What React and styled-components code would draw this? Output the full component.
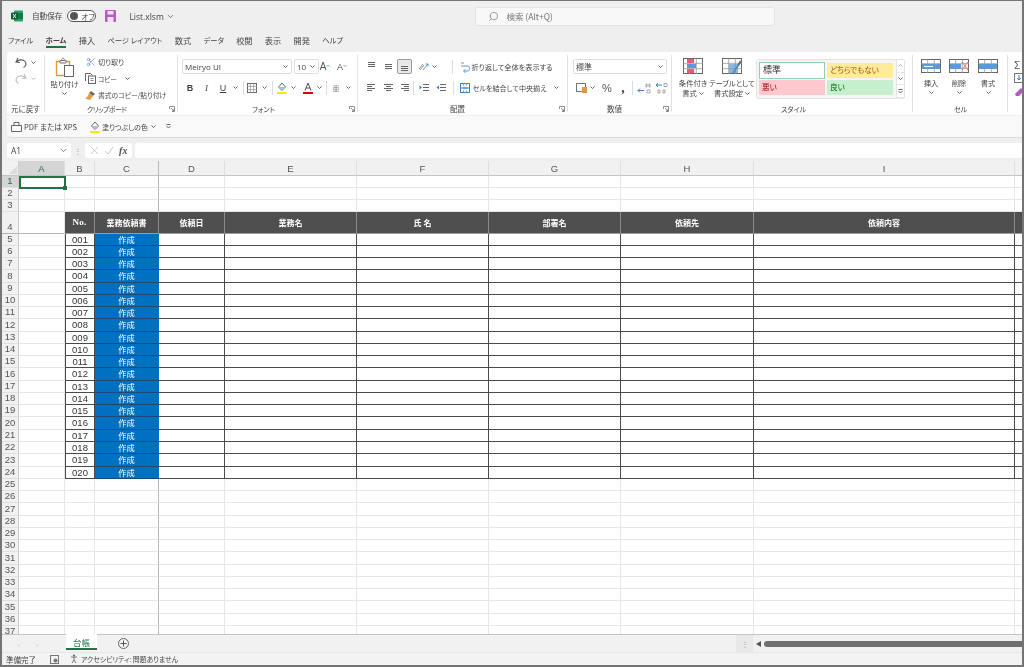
import React from "react";
import styled, { createGlobalStyle } from "styled-components";
import { Search, Scissors, ChevronDown } from "lucide-react";

const Global = createGlobalStyle`
  html, body { margin: 0; padding: 0; background: #efefef; }
  * { box-sizing: border-box; }
  body {
    font-family: "Noto Sans CJK JP", "Noto Sans", sans-serif;
    font-feature-settings: "palt";
    color: #444;
    overflow: hidden;
  }
`;

const Window = styled.div`
  width: 1024px;
  height: 667px;
  display: flex;
  flex-direction: column;
  border: 2px solid #757575;
  border-width: 1.5px 2px 2px 2px;
  background: #efefef;
  overflow: hidden;
  filter: blur(0.35px);
`;

/* title bar */
const TitleBar = styled.div`
  height: 30px;
  flex: none;
  display: flex;
  align-items: center;
  padding-left: 9px;
  font-size: 8.5px;
`;
const Toggle = styled.div`
  width: 29px;
  height: 12px;
  margin-left: 5px;
  border: 1px solid #555;
  border-radius: 7px;
  background: #fff;
  display: flex;
  align-items: center;
  padding-left: 2px;
  gap: 3px;
  font-size: 7.5px;
  &::before {
    content: "";
    width: 8px;
    height: 8px;
    border-radius: 50%;
    background: #555;
  }
`;
const FileName = styled.span`
  margin-left: 13px;
  font-family: "Open Sans", sans-serif;
  font-size: 8.5px;
  width: 37px;
`;
const SearchBox = styled.div`
  margin-left: 300px;
  width: 300px;
  height: 19px;
  background: #f8f8f8;
  border: 1px solid #e4e4e4;
  border-radius: 3px;
  display: flex;
  align-items: center;
  gap: 7px;
  padding-left: 12px;
  font-size: 8.5px;
  color: #777;
`;

/* tabs */
const TabRow = styled.div`
  height: 21px;
  flex: none;
  display: flex;
  align-items: center;
  padding: 0 0 4px 6px;
  gap: 12.3px;
`;
const Tab = styled.div`
  position: relative;
  font-size: ${(p) => (p.$kana ? 7.3 : 8.2)}px;
  line-height: 12px;
  white-space: nowrap;
  font-weight: ${(p) => (p.$on ? 700 : 400)};
  ${(p) =>
    p.$on &&
    `&::after { content: ""; position: absolute; left: 0; right: 0; bottom: -2px; height: 1.5px; background: #217346; }`}
`;

/* ribbon */
const Ribbon = styled.div`
  height: 63px;
  flex: none;
  margin-left: 5px;
  padding: 3px 0;
  display: flex;
  background: #fff;
  border-radius: 4px 0 0 4px;
  overflow: hidden;
`;
const Group = styled.div`
  position: relative;
  flex: none;
  width: ${(p) => p.$w}px;
  padding: 4px 0 0 ${(p) => p.$pl || 0}px;
  border-right: 1px solid #e2e2e2;
  display: flex;
  flex-direction: ${(p) => (p.$row ? "row" : "column")};
`;
const GroupLabel = styled.div`
  position: absolute;
  left: ${(p) => p.$x}px;
  bottom: -2px;
  font-size: ${(p) => p.$s || 7.5}px;
  letter-spacing: ${(p) => p.$ls || 0}px;
  line-height: 10px;
  white-space: nowrap;
`;
const Launcher = styled.svg`
  position: absolute;
  right: 2px;
  bottom: 0;
`;
const Row = styled.div`
  display: flex;
  align-items: center;
  height: ${(p) => p.$h || 15}px;
  margin-top: ${(p) => p.$mt || 0}px;
`;
const Stack = styled.div`
  margin-top: ${(p) => p.$mt || 0}px;
`;
const Slot = styled.div`
  flex: none;
  width: ${(p) => p.$w}px;
  height: ${(p) => (p.$h ? `${p.$h}px` : "auto")};
  margin-left: ${(p) => p.$ml || 0}px;
  margin-top: ${(p) => p.$mt || 0}px;
  display: flex;
  align-items: center;
  justify-content: center;
  position: relative;
  color: ${(p) => p.$c || "inherit"};
  font-size: ${(p) => p.$s || 8}px;
`;
const Sep = styled.div`
  flex: none;
  width: 1px;
  height: 14px;
  background: #dcdcdc;
  margin: 0 ${(p) => p.$r ?? p.$m}px 0 ${(p) => p.$m}px;
`;
const Combo = styled.div`
  flex: none;
  width: ${(p) => p.$w}px;
  height: 15px;
  margin-right: ${(p) => p.$mr || 0}px;
  border: 1px solid #dedede;
  border-radius: 2px;
  background: #fff;
  display: flex;
  align-items: center;
  justify-content: space-between;
  padding: 0 3px 0 2px;
  font-size: 8px;
  font-family: ${(p) => (p.$latin ? '"Open Sans", sans-serif' : "inherit")};
`;
const Small = styled.span`
  font-size: ${(p) => p.$s || 8}px;
  line-height: 10px;
  white-space: nowrap;
  margin-left: ${(p) => p.$ml || 0}px;
  color: ${(p) => p.$c || "inherit"};
  font-weight: ${(p) => p.$b || 400};
  font-family: ${(p) =>
    p.$serif ? '"Liberation Serif", serif' : p.$sans ? '"Liberation Sans", sans-serif' : "inherit"};
  font-style: ${(p) => (p.$i ? "italic" : "normal")};
  text-decoration: ${(p) => (p.$u ? "underline" : "none")};
`;
const BigButton = styled.div`
  flex: none;
  width: ${(p) => p.$w}px;
  margin: -2px 0 0 ${(p) => p.$ml || 0}px;
  display: flex;
  flex-direction: column;
  align-items: center;
  font-size: 7.3px;
  line-height: 10px;
  white-space: nowrap;
`;
const BigLine = styled.span`
  display: flex;
  align-items: center;
  gap: 2px;
`;
const IconBox = styled.div`
  height: ${(p) => p.$h || 18}px;
  display: flex;
  align-items: center;
  margin-bottom: ${(p) => p.$mb || 3}px;
`;
const Pressed = styled.div`
  width: 15px;
  height: 15px;
  display: flex;
  align-items: center;
  justify-content: center;
  background: #e9e9e9;
  border: 1px solid #9b9b9b;
  border-radius: 2px;
`;
const Gallery = styled.div`
  flex: none;
  margin-left: 3px;
  width: 149px;
  height: 40px;
  border: 1px solid #e4e4e4;
  border-radius: 2px;
  background: #f5f5f5;
  display: grid;
  grid-template-columns: 66px 66px 1fr;
  grid-template-rows: repeat(2, 1fr);
  column-gap: 2px;
  padding: 2px 0 2px 2px;
`;
const StyleCell = styled.div`
  margin: ${(p) => (p.$sel ? 0 : "1px 0")};
  background: ${(p) => p.$bg};
  color: ${(p) => p.$c};
  border: ${(p) => (p.$sel ? "1px solid #93cdb0" : "none")};
  font-size: ${(p) => (p.$sel ? 9 : 7.6)}px;
  line-height: 14px;
  padding-left: 3px;
  white-space: nowrap;
`;
const GalleryScroll = styled.div`
  grid-column: 3;
  grid-row: 1 / 3;
  margin: -2px 0 -2px 1px;
  border-left: 1px solid #e4e4e4;
  background: #fff;
  display: flex;
  flex-direction: column;
  & > div {
    flex: 1;
    display: flex;
    align-items: center;
    justify-content: center;
    border-bottom: 1px solid #e4e4e4;
  }
`;

/* quick access + formula */
const QuickBar = styled.div`
  height: 22px;
  flex: none;
  margin: 1px 0 0 5px;
  background: #f9f9f9;
  border-bottom: 1px solid #dcdcdc;
  border-radius: 0 0 0 4px;
  display: flex;
  align-items: center;
  padding-left: 4px;
`;
const FormulaBar = styled.div`
  height: 15px;
  flex: none;
  margin: 5px 0 0 5px;
  display: flex;
  align-items: center;
`;
const NameBox = styled.div`
  width: 64px;
  height: 15px;
  background: #fff;
  border-radius: 2px;
  display: flex;
  align-items: center;
  justify-content: space-between;
  padding: 0 3px 0 4px;
  font-family: "Open Sans", sans-serif;
  font-size: 8.5px;
`;
const Dots = styled.div`
  width: 14px;
  text-align: center;
  font-size: 8px;
  line-height: 15px;
  color: #999;
`;
const FxBox = styled.div`
  width: 47px;
  height: 15px;
  background: #fff;
  border-radius: 2px;
  display: flex;
  align-items: center;
  justify-content: space-around;
  padding: 0 2px;
`;
const FormulaInput = styled.div`
  flex: 1;
  height: 15px;
  margin-left: 3px;
  background: #fff;
  border-radius: 2px 0 0 2px;
`;

/* sheet */
const Sheet = styled.div`
  position: relative;
  flex: 1;
  min-height: 0;
  margin-top: 2.5px;
  background: #fff;
  overflow: hidden;
  display: grid;
  grid-template-columns: 17px 46px 30px 64px 66px 132px 132px 132px 133px 261px 9px;
  grid-template-rows: 15px repeat(3, 12px) 22px repeat(33, 12.27px);
`;
const Corner = styled.div`
  background: #f1f1f1;
  border-right: 1px solid #d0d0d0;
  border-bottom: 1px solid #c4c4c4;
  position: relative;
  &::after {
    content: "";
    position: absolute;
    right: 1px;
    bottom: 1px;
    border: 4px solid transparent;
    border-right-color: #dcdcdc;
    border-bottom-color: #dcdcdc;
  }
`;
const ColHead = styled.div`
  background: ${(p) => (p.$on ? "#d4d4d4" : "#f1f1f1")};
  color: ${(p) => (p.$on ? "#217346" : "#555")};
  border-right: ${(p) => (p.$freeze ? "1.5px solid #b5b5b5" : "1px solid #dedede")};
  border-bottom: 1px solid #c4c4c4;
  font-family: "Liberation Sans", sans-serif;
  font-size: 9.5px;
  line-height: 15px;
  text-align: center;
`;
const RowHead = styled.div`
  background: ${(p) => (p.$on ? "#d4d4d4" : "#f1f1f1")};
  color: ${(p) => (p.$on ? "#217346" : "#555")};
  border-right: 1px solid #c8c8c8;
  border-bottom: ${(p) => (p.$freeze ? "1.5px solid #b5b5b5" : "1px solid #e0e0e0")};
  font-family: "Liberation Sans", sans-serif;
  font-size: 9.5px;
  display: flex;
  align-items: flex-end;
  justify-content: center;
  line-height: 12px;
  overflow: hidden;
`;
const Cell = styled.div`
  background: #fff;
  border-right: ${(p) => (p.$freeze ? "1.5px solid #b5b5b5" : "1px solid #e6e6e6")};
  border-bottom: ${(p) => (p.$freezeRow ? "1.5px solid #b5b5b5" : "1px solid #e6e6e6")};
`;
const HeadCell = styled.div`
  background: #4f4f4f;
  color: #fff;
  font-size: ${(p) => (p.$serif ? 9 : 8)}px;
  font-weight: 700;
  display: flex;
  align-items: center;
  justify-content: center;
  border-right: 1px solid ${(p) => (p.$dark ? "#1c1c1c" : "#8a8a8a")};
  border-bottom: 1.5px solid #9a9a9a;
  font-family: ${(p) => (p.$serif ? '"Liberation Serif", serif' : "inherit")};
  letter-spacing: ${(p) => (p.$serif ? "0.3px" : 0)};
`;
const DataCell = styled.div`
  background: ${(p) => (p.$blue ? "#0070c0" : "#fff")};
  color: ${(p) => (p.$blue ? "#fff" : "#333")};
  border-right: 1px solid ${(p) => (p.$blue ? "#0070c0" : "#4a4a4a")};
  border-left: ${(p) => (p.$first ? "1px solid #4a4a4a" : "none")};
  border-bottom: 1px solid ${(p) => (p.$blue ? "#1b4a78" : "#4a4a4a")};
  font-family: ${(p) => (p.$blue ? "inherit" : '"Liberation Sans", sans-serif')};
  font-size: ${(p) => (p.$blue ? 8.2 : 9.5)}px;
  line-height: 11px;
  text-align: center;
`;
const Selection = styled.div`
  position: absolute;
  left: 17px;
  top: 15px;
  width: 47px;
  height: 13px;
  border: 2px solid #217346;
  pointer-events: none;
  &::after {
    content: "";
    position: absolute;
    right: -3px;
    bottom: -3px;
    width: 4px;
    height: 4px;
    background: #217346;
  }
`;

/* bottom */
const SheetTabs = styled.div`
  height: 18px;
  flex: none;
  display: flex;
  align-items: flex-start;
  background: #f1f1f1;
  border-top: 1px solid #c4c4c4;
`;
const SheetTab = styled.div`
  width: 31px;
  height: 16px;
  margin: -1px 0 0 20px;
  background: #fff;
  border-bottom: 2px solid #217346;
  color: #217346;
  font-size: 8.5px;
  line-height: 16px;
  text-align: center;
`;
const ScrollGrip = styled.div`
  width: 17px;
  height: 17px;
  margin-left: 607px;
  background: #e8e8e8;
  color: #999;
  font-size: 8px;
  text-align: center;
  line-height: 17px;
`;
const ScrollTrack = styled.div`
  flex: 1;
  height: 17px;
  display: flex;
  align-items: center;
  padding-left: 3px;
  gap: 3px;
`;
const ScrollThumb = styled.div`
  flex: 1;
  height: 6px;
  background: #707070;
  border-radius: 3px 0 0 3px;
`;
const StatusBar = styled.div`
  height: 13px;
  flex: none;
  display: flex;
  align-items: center;
  padding-left: 4px;
  font-size: 7.5px;
  background: #f3f3f3;
  border-top: 1px solid #e6e6e6;
`;
const AccessText = styled.span`
  margin-left: 1px;
  font-size: 6.9px;
  white-space: nowrap;
`;

/* drawings */
const Svg = ({ w, h, children }) => (
  <svg width={w} height={h} viewBox={`0 0 ${w} ${h}`} fill="none" style={{ display: "block", flex: "none" }}>
    {children}
  </svg>
);
const Chev = ({ c = "#666" }) => (
  <Svg w={5} h={3}>
    <path d="M.5.5 2.5 2.5 4.5.5" stroke={c} />
  </Svg>
);
const Lines = ({ rows }) => (
  <Svg w={11} h={11}>
    {rows.map(([a, b, y]) => (
      <path key={y} d={`M${a} ${y}.5H${b}`} stroke="#666" />
    ))}
  </Svg>
);
const Corner9 = () => (
  <Launcher width="6" height="6" viewBox="0 0 6 6" fill="none">
    <path d="M.5 3V.5H5.5V5.5H3M2 2l3 3M3 5h2V3" stroke="#777" strokeWidth=".8" />
  </Launcher>
);
const GridIcon = ({ w = 20, h = 15, children }) => (
  <Svg w={w} h={h}>
    <rect x=".5" y=".5" width={w - 1} height={h - 1} stroke="#666" />
    <path d={`M${w / 3} .5V${h}M${(w * 2) / 3} .5V${h}M.5 ${h / 3}H${w}M.5 ${(h * 2) / 3}H${w}`} stroke="#999" strokeWidth=".8" />
    {children}
  </Svg>
);
const ExcelIcon = () => (
  <Svg w={12} h={12}>
    <rect x="3" y="0.5" width="9" height="11" rx="1" fill="#21a366" />
    <rect x="7" y="3" width="5" height="6" fill="#107c41" />
    <rect x="0" y="2.5" width="7" height="7" rx="1" fill="#185c37" />
    <path d="M2 4l3 4M5 4 2 8" stroke="#fff" strokeWidth=".9" />
  </Svg>
);
const SaveIcon = () => (
  <Svg w={11} h={12}>
    <rect width="11" height="12" rx="1" fill="#b45bc0" />
    <rect x="2.5" y="1" width="6" height="3.5" fill="#f3e2f5" />
    <rect x="2.5" y="7" width="6" height="5" fill="#f3e2f5" />
  </Svg>
);
const PasteIcon = () => (
  <Svg w={19} h={20}>
    <path d="M1.5 4.5h13v14h-13z" stroke="#e8963c" strokeWidth="1.4" fill="#fff" />
    <path d="M5 3.5h6V6H5z" stroke="#777" fill="#fff" />
    <path d="M6.5 3.5c0-3 3-3 3 0" stroke="#777" />
    <rect x="9.5" y="8.5" width="9" height="11" fill="#fff" stroke="#666" />
  </Svg>
);
const CopyIcon = () => (
  <Svg w={11} h={11}>
    <path d="M.5 8V.5h5l2 2" stroke="#666" />
    <rect x="3.5" y="3" width="7" height="7.5" fill="#fff" stroke="#666" />
    <path d="M5.5 5.5h3M5.5 7.5h3" stroke="#888" />
  </Svg>
);
const BrushIcon = () => (
  <Svg w={11} h={11}>
    <path d="M6 1l4 3-2 2-4-3z" fill="#6a6a6a" />
    <path d="M4 3l4 3-3 4L0 8.5C2 8 3 6 4 3z" fill="#ea9a3e" />
  </Svg>
);
const FillIcon = ({ w = 10 }) => (
  <Svg w={w} h={12}>
    <path d="M5 1 8.5 5 5 8.5 1.5 5z" stroke="#666" fill="#fff" />
    <path d="M1.5 5h7L5 8.5z" fill="#9cc7e8" />
    <rect y="10" width={w} height="2" fill="#f7ec00" />
  </Svg>
);
const FontColorIcon = () => (
  <Svg w={10} h={12}>
    <path d="M2 8.5 5 1l3 7.5M3 6h4" stroke="#555" />
    <rect y="10" width="10" height="2" fill="#e80000" />
  </Svg>
);
const FontSizeIcon = ({ s, down }) => (
  <Slot $w={12}>
    <Small $sans $s={s} $c="#555">A</Small>
    <Svg w={4} h={6}>
      <path d={down ? "M.5 1 2 2.5 3.5 1" : "M.5 2.5 2 1 3.5 2.5"} stroke="#5b9bd5" strokeWidth=".8" />
    </Svg>
  </Slot>
);
const WrapIcon = () => (
  <Svg w={10} h={12}>
    <path d="M1 2h3M1 5h7c2 0 2 5 0 5H4" stroke="#5b9bd5" />
    <path d="M5.5 8 3.5 10l2 2" stroke="#5b9bd5" />
  </Svg>
);
const MergeIcon = () => (
  <Svg w={10} h={10}>
    <rect x=".5" y=".5" width="9" height="9" stroke="#3f7fbf" />
    <path d="M.5 5h9M3 5h4" stroke="#3f7fbf" />
    <path d="M3.5 .5v2M6.5 .5v2M3.5 7.5v2M6.5 7.5v2" stroke="#999" />
  </Svg>
);
const IndentIcon = ({ flip }) => (
  <Svg w={10} h={9}>
    <path d="M4 1.5h6M4 4.5h6M4 7.5h6" stroke="#666" />
    <path d={flip ? "M3 2.5v4L.5 4.5z" : "M.5 2.5v4L3 4.5z"} fill="#3f7fbf" />
  </Svg>
);
const DecimalIcon = ({ more }) => (
  <Svg w={14} h={12}>
    <path d={more ? "M7 8.5H1M3 6.5 1 8.5l2 2" : "M8 3H2M4 1 2 3l2 2"} stroke="#3f7fbf" />
    <path d={more ? "M9 2h1v3H9zM12 2h1v3h-1zM10 8h3v3h-3z" : "M10 1.5h3v3h-3zM4 8h2v3H4zM9 8h2v3H9z"} stroke="#888" strokeWidth=".7" />
  </Svg>
);
const OrientIcon = () => (
  <Svg w={11} h={10}>
    <path d="M1 7 5 2M2 8l4-5" stroke="#777" strokeWidth=".8" />
    <path d="M5 8 10 2M7.5 2H10v2.5" stroke="#5b9bd5" />
  </Svg>
);
const CustomizeMark = () => (
  <Svg w={5} h={5}>
    <path d="M.5 .5h4M.5 2 2.5 4 4.5 2" stroke="#666" />
  </Svg>
);

const columns = ["A", "B", "C", "D", "E", "F", "G", "H", "I", "J"];
const heads = [
  { t: "No.", serif: true },
  { t: "業務依頼書" },
  { t: "依頼日" },
  { t: "業務名" },
  { t: "氏  名" },
  { t: "部署名" },
  { t: "依頼先" },
  { t: "依頼内容" },
];
const rowNumbers = Array.from({ length: 37 }, (_, i) => i + 1);

const SheetRow = ({ n }) => {
  const head = <RowHead $on={n === 1} $freeze={n === 4}>{n}</RowHead>;
  if (n === 4) {
    return (
      <>
        {head}
        <Cell $freezeRow />
        {heads.map((h) => (
          <HeadCell key={h.t} $serif={h.serif}>{h.t}</HeadCell>
        ))}
        <HeadCell $dark />
      </>
    );
  }
  if (n >= 5 && n <= 24) {
    const no = String(n - 4).padStart(3, "0");
    return (
      <>
        {head}
        <Cell />
        <DataCell $first>{no}</DataCell>
        <DataCell $blue>作成</DataCell>
        {columns.slice(3).map((c) => (
          <DataCell key={c} />
        ))}
      </>
    );
  }
  return (
    <>
      {head}
      {columns.map((c) => (
        <Cell key={c} $freeze={c === "C"} />
      ))}
    </>
  );
};

const App = () => (
  <>
    <Global />
    <Window>
      <TitleBar>
        <ExcelIcon />
        <Small $ml={9} $s={7.6}>自動保存</Small>
        <Toggle>オフ</Toggle>
        <Slot $w={11} $ml={9}><SaveIcon /></Slot>
        <FileName>List.xlsm</FileName>
        <ChevronDown size={9} strokeWidth={2} color="#555" />
        <SearchBox>
          <Search size={11} strokeWidth={1.5} style={{ transform: "scaleX(-1)" }} />
          検索 (Alt+Q)
        </SearchBox>
      </TitleBar>

      <TabRow>
        <Tab $kana>ファイル</Tab>
        <Tab $on $kana>ホーム</Tab>
        <Tab>挿入</Tab>
        <Tab $kana>ページ レイアウト</Tab>
        <Tab>数式</Tab>
        <Tab $kana>データ</Tab>
        <Tab>校閲</Tab>
        <Tab>表示</Tab>
        <Tab>開発</Tab>
        <Tab $kana>ヘルプ</Tab>
      </TabRow>

      <Ribbon>
        <Group $w={38} $pl={8}>
          <Stack $mt={-3}>
            <Row $h={12}>
              <Svg w={12} h={11}>
                <path d="M3 1 1 5l4 .5M1.5 5C3.5 2.5 8 2 10 4.5s.5 5-1.5 6" stroke="#555" strokeWidth="1.1" />
              </Svg>
              <Slot $w={12}><Chev /></Slot>
            </Row>
            <Row $h={12} $mt={4}>
              <Svg w={12} h={11}>
                <path d="M9 1l2 4-4 .5M10.5 5C8.5 2.5 4 2 2 4.5s-.5 5 1.5 6" stroke="#bdbdbd" strokeWidth="1.1" />
              </Svg>
              <Slot $w={12}><Chev c="#bbb" /></Slot>
            </Row>
          </Stack>
          <GroupLabel $x={4}>元に戻す</GroupLabel>
        </Group>

        <Group $w={133} $row $pl={5}>
          <BigButton $w={29}>
            <IconBox $h={20} $mb={2}><PasteIcon /></IconBox>
            貼り付け
            <Slot $w={10} $mt={3}><Chev /></Slot>
          </BigButton>
          <Stack $mt={-4}>
            <Row $h={14}>
              <Slot $w={11} $ml={6}><Scissors size={10} strokeWidth={1.3} color="#3f7fbf" /></Slot>
              <Small $ml={2} $s={7.1}>切り取り</Small>
            </Row>
            <Row $h={14} $mt={2.5}>
              <Slot $w={11} $ml={6}><CopyIcon /></Slot>
              <Small $ml={2} $s={6.6}>コピー</Small>
              <Slot $w={5} $ml={8}><Chev /></Slot>
            </Row>
            <Row $h={14} $mt={2.5}>
              <Slot $w={11} $ml={6}><BrushIcon /></Slot>
              <Small $ml={2} $s={6.8}>書式のコピー/貼り付け</Small>
            </Row>
          </Stack>
          <GroupLabel $x={42} $s={7} $ls={-0.55}>クリップボード</GroupLabel>
          <Corner9 />
        </Group>

        <Group $w={180} $pl={4}>
          <Row>
            <Combo $w={110} $mr={2} $latin>Meiryo UI<Chev /></Combo>
            <Combo $w={25} $latin>10<Chev /></Combo>
            <FontSizeIcon s={10} />
            <Slot $w={5} />
            <FontSizeIcon s={9} down />
          </Row>
          <Row $mt={6}>
            <Slot $w={16}><Small $sans $b={700} $s={9}>B</Small></Slot>
            <Slot $w={17}><Small $serif $i $s={9}>I</Small></Slot>
            <Slot $w={16}><Small $sans $u $s={9}>U</Small></Slot>
            <Slot $w={8}><Chev /></Slot>
            <Sep $m={3.5} />
            <Slot $w={10}><GridIcon w={10} h={10} /></Slot>
            <Slot $w={14}><Chev /></Slot>
            <Sep $m={0.5} />
            <Slot $w={17}><FillIcon /></Slot>
            <Slot $w={6}><Chev /></Slot>
            <Slot $w={12} $ml={6}><FontColorIcon /></Slot>
            <Slot $w={6} $ml={2}><Chev /></Slot>
            <Sep $m={3.5} />
            <Slot $w={12}><Small $s={7} $c="#888">亜</Small></Slot>
            <Slot $w={6} $ml={3}><Chev /></Slot>
          </Row>
          <GroupLabel $x={74} $s={7}>フォント</GroupLabel>
          <Corner9 />
        </Group>

        <Group $w={210} $pl={5}>
          <Row>
            <Slot $w={17}><Lines rows={[[2, 9, 1], [2, 9, 3], [2, 9, 5]]} /></Slot>
            <Slot $w={16}><Lines rows={[[2, 9, 3], [2, 9, 5], [2, 9, 7]]} /></Slot>
            <Slot $w={16}><Pressed><Lines rows={[[2, 9, 5], [2, 9, 7], [2, 9, 9]]} /></Pressed></Slot>
            <Slot $w={12} $ml={5}><OrientIcon /></Slot>
            <Slot $w={6} $ml={2}><Chev /></Slot>
            <Sep $m={14.5} $r={7} />
            <Slot $w={10}><WrapIcon /></Slot>
            <Small $ml={2} $s={7.2}>折り返して全体を表示する</Small>
          </Row>
          <Row $mt={6}>
            <Slot $w={17}><Lines rows={[[1, 9, 2], [1, 6, 4], [1, 9, 6], [1, 6, 8]]} /></Slot>
            <Slot $w={16}><Lines rows={[[1, 10, 2], [3, 8, 4], [1, 10, 6], [3, 8, 8]]} /></Slot>
            <Slot $w={16}><Lines rows={[[2, 10, 2], [5, 10, 4], [2, 10, 6], [5, 10, 8]]} /></Slot>
            <Sep $m={1} />
            <Slot $w={17}><IndentIcon /></Slot>
            <Slot $w={17}><IndentIcon flip /></Slot>
            <Sep $m={4} $r={5.5} />
            <Slot $w={10}><MergeIcon /></Slot>
            <Small $ml={3} $s={7.1}>セルを結合して中央揃え</Small>
            <Slot $w={5} $ml={7}><Chev /></Slot>
          </Row>
          <GroupLabel $x={92}>配置</GroupLabel>
          <Corner9 />
        </Group>

        <Group $w={104} $pl={5}>
          <Row><Combo $w={94}>標準<Chev /></Combo></Row>
          <Row $mt={6}>
            <Slot $w={12} $ml={2}>
              <Svg w={11} h={11}>
                <rect x=".5" y="1.5" width="9" height="8" stroke="#777" />
                <rect x="6" y="5" width="5" height="6" fill="#e8963c" />
              </Svg>
            </Slot>
            <Slot $w={6} $ml={2}><Chev /></Slot>
            <Slot $w={14} $ml={5}><Small $sans $s={11} $c="#555">%</Small></Slot>
            <Slot $w={12} $ml={3}><Small $serif $s={14} $b={700} $c="#444">,</Small></Slot>
            <Sep $m={3} />
            <Slot $w={15}><DecimalIcon more /></Slot>
            <Slot $w={15} $ml={2}><DecimalIcon /></Slot>
          </Row>
          <GroupLabel $x={39}>数値</GroupLabel>
          <Corner9 />
        </Group>

        <Group $w={241} $row $pl={5}>
          <BigButton $w={32}>
            <IconBox><GridIcon h={16}><rect x="4" y="1" width="7" height="4" fill="#ef5a6c" /><rect x="4" y="6" width="9" height="4" fill="#5b9bd5" /><rect x="4" y="11" width="7" height="4" fill="#ef5a6c" /></GridIcon></IconBox>
            条件付き
            <BigLine>書式<Chev /></BigLine>
          </BigButton>
          <BigButton $w={42} $ml={2}>
            <IconBox><GridIcon h={16}><path d="M11 15l8-12" stroke="#666" strokeWidth="2" /><rect x="7" y="6" width="9" height="9" fill="#5b9bd5" opacity=".7" /></GridIcon></IconBox>
            テーブルとして
            <BigLine>書式設定<Chev /></BigLine>
          </BigButton>
          <Gallery>
            <StyleCell $sel $bg="#fff" $c="#333">標準</StyleCell>
            <StyleCell $bg="#ffeb9c" $c="#9c5700">どちらでもない</StyleCell>
            <GalleryScroll>
              <div><Svg w={5} h={3}><path d="M.5 2.5 2.5.5 4.5 2.5" stroke="#aaa" /></Svg></div>
              <div><Chev /></div>
              <div><CustomizeMark /></div>
            </GalleryScroll>
            <StyleCell $bg="#ffc7ce" $c="#9c0006">悪い</StyleCell>
            <StyleCell $bg="#c6efce" $c="#006100">良い</StyleCell>
          </Gallery>
          <GroupLabel $x={109} $s={7}>スタイル</GroupLabel>
        </Group>

        <Group $w={95} $row $pl={4}>
          <BigButton $w={28}>
            <IconBox><GridIcon h={14}><rect x="1" y="5" width="18" height="5" fill="#5b9bd5" /><path d="M12 7.5H3" stroke="#fff" /></GridIcon></IconBox>
            挿入
            <Slot $w={10} $mt={3}><Chev /></Slot>
          </BigButton>
          <BigButton $w={28}>
            <IconBox><GridIcon h={14}><rect x="1" y="5" width="11" height="5" fill="#5b9bd5" /><path d="M13 3l6 8M19 3l-6 8" stroke="#ef6a6a" /></GridIcon></IconBox>
            削除
            <Slot $w={10} $mt={3}><Chev /></Slot>
          </BigButton>
          <BigButton $w={30}>
            <IconBox><GridIcon h={14}><rect x="1" y="5" width="18" height="5" fill="#5b9bd5" /></GridIcon></IconBox>
            書式
            <Slot $w={10} $mt={3}><Chev /></Slot>
          </BigButton>
          <GroupLabel $x={41} $s={7}>セル</GroupLabel>
        </Group>

        <Group $w={20} $pl={6}>
          <Small $sans $s={10} $c="#555" style={{ lineHeight: "14px" }}>Σ</Small>
          <Svg w={10} h={10}>
            <rect x=".5" y=".5" width="9" height="9" stroke="#777" />
            <path d="M5 2v5M3 5l2 2 2-2" stroke="#3f7fbf" />
          </Svg>
          <Svg w={10} h={14}>
            <path d="M1 11 7 5l3 3-5 5H2z" fill="#b45bc0" />
          </Svg>
        </Group>
      </Ribbon>

      <QuickBar>
        <Svg w={11} h={10}>
          <path d="M.5 3.5h10v6H.5zM3 3.5V.5h5v3" stroke="#666" />
        </Svg>
        <Small $ml={2} $s={7.6}>PDF または XPS</Small>
        <Slot $w={10} $ml={13}><FillIcon /></Slot>
        <Small $ml={2} $s={7}>塗りつぶしの色</Small>
        <Slot $w={5} $ml={3}><Chev /></Slot>
        <Slot $w={5} $ml={10}><CustomizeMark /></Slot>
      </QuickBar>

      <FormulaBar>
        <NameBox>A1<ChevronDown size={9} color="#555" /></NameBox>
        <Dots>⋮</Dots>
        <FxBox>
          <Svg w={9} h={9}><path d="M1 1l7 7M8 1 1 8" stroke="#c8c8c8" /></Svg>
          <Svg w={10} h={9}><path d="M1 5l3 3 5-7" stroke="#c8c8c8" /></Svg>
          <Small $serif $i $b={700} $s={10} $c="#555">fx</Small>
        </FxBox>
        <FormulaInput />
      </FormulaBar>

      <Sheet>
        <Corner />
        {columns.map((c) => (
          <ColHead key={c} $on={c === "A"} $freeze={c === "C"}>{c === "J" ? "" : c}</ColHead>
        ))}
        {rowNumbers.map((n) => (
          <SheetRow key={n} n={n} />
        ))}
        <Selection />
      </Sheet>

      <SheetTabs>
        <Slot $w={18} $h={17} $ml={8} $c="#bbb" $s={7}>‹</Slot>
        <Slot $w={18} $h={17} $c="#bbb" $s={7}>›</Slot>
        <SheetTab>台帳</SheetTab>
        <Slot $w={12} $h={17} $ml={20}>
          <Svg w={11} h={11}>
            <circle cx="5.5" cy="5.5" r="5" stroke="#666" />
            <path d="M5.5 2.5v6M2.5 5.5h6" stroke="#555" />
          </Svg>
        </Slot>
        <ScrollGrip>⋮</ScrollGrip>
        <ScrollTrack>
          <Svg w={5} h={6}><path d="M5 0v6L0 3z" fill="#555" /></Svg>
          <ScrollThumb />
        </ScrollTrack>
      </SheetTabs>

      <StatusBar>
        準備完了
        <Slot $w={9} $ml={14}>
          <Svg w={9} h={9}>
            <rect x=".5" y=".5" width="8" height="8" stroke="#777" />
            <circle cx="5.5" cy="5.5" r="2" fill="#777" />
          </Svg>
        </Slot>
        <Slot $w={10} $ml={11}>
          <Svg w={10} h={10}>
            <circle cx="4" cy="1.5" r="1" fill="#555" />
            <path d="M1 3h6M4 3v3l-2 3M4 6l2 3" stroke="#555" strokeWidth=".8" />
          </Svg>
        </Slot>
        <AccessText>アクセシビリティ: 問題ありません</AccessText>
      </StatusBar>
    </Window>
  </>
);

export default App;
